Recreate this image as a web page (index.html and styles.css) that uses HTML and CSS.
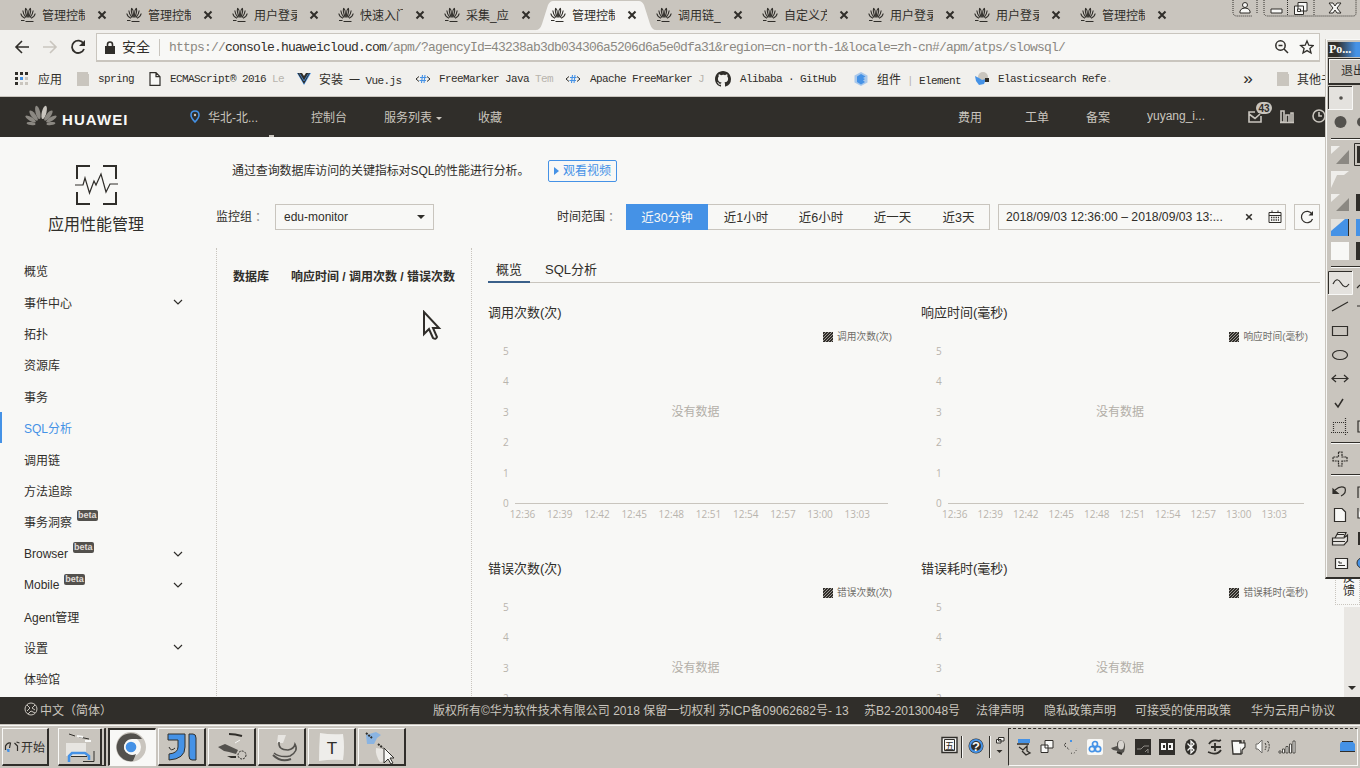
FILE: index.html
```html
<!DOCTYPE html>
<html lang="zh-CN">
<head>
<meta charset="utf-8">
<title>应用性能管理</title>
<link rel="stylesheet" href="styles.css">
</head>
<body>
<svg class="defs" width="0" height="0">
  <symbol id="petal" viewBox="0 0 16 16">
    <path d="M7.3 10.5Q4.6 5 5.6 1.5Q7.8 2 7.3 10.5M8.7 10.5Q11.4 5 10.4 1.5Q8.2 2 8.7 10.5M6 10.5Q3.2 7.500 2.800 3.500M10 10.500Q12.800 7.500 13.200 3.500M5 11.200Q1.500 10 .8 6.500M11 11.200Q14.500 10 15.200 6.500" fill="none" stroke="#302e2a" stroke-width="1.1"/>
    <path d="M1 13.500H4.500M5.500 14.500H13.500" stroke="#302e2a" stroke-width="1"/>
  </symbol>
  <symbol id="x" viewBox="0 0 10 10"><path d="M1.500 1.500L8.500 8.500M8.500 1.500L1.500 8.500" stroke="#302e2a" stroke-width="2"/></symbol>
  <symbol id="chev" viewBox="0 0 10 6"><path d="M1 1L5 5L9 1" fill="none" stroke="#302e2a" stroke-width="1.2"/></symbol>
  <symbol id="folder" viewBox="0 0 12 14"><path d="M0 0H11V2H12V14H0Z" fill="#c9c5be"/></symbol>
  <symbol id="fm" viewBox="0 0 16 12"><path d="M4 3.500L1 6L4 8.500M12 3.500L15 6L12 8.500" fill="none" stroke="#302e2a"/><path d="M7.500 2L6.500 10M10 2L9 10M5 4.500H11.500M4.500 7.500H11" stroke="#4592e6" stroke-width="1.100"/></symbol>
  <symbol id="swatch" viewBox="0 0 10 10"><path d="M0 0H10V10H0Z" fill="#302e2a"/><path d="M0 3L3 0M0 6L6 0M0 9L9 0M2 10L10 2M5 10L10 5M8 10L10 8" stroke="#aaa7a1" stroke-width=".9"/></symbol>
</svg>

<div class="tabs">
  <svg class="tab-active" width="121" height="31" viewBox="0 0 121 31"><path d="M0 30Q4 30 6 24L12 5Q14 1 17 1H103Q106 1 108 5L114 24Q116 30 120 30V31H0Z" fill="#f4f3f1"/></svg>
  <div class="tab"><svg><use href="#petal"/></svg><span>管理控制</span><svg class="close"><use href="#x"/></svg></div>
  <div class="tab"><svg><use href="#petal"/></svg><span>管理控制</span><svg class="close"><use href="#x"/></svg></div>
  <div class="tab"><svg><use href="#petal"/></svg><span>用户登录</span><svg class="close"><use href="#x"/></svg></div>
  <div class="tab"><svg><use href="#petal"/></svg><span>快速入门</span><svg class="close"><use href="#x"/></svg></div>
  <div class="tab"><svg><use href="#petal"/></svg><span>采集_应</span><svg class="close"><use href="#x"/></svg></div>
  <div class="tab"><svg><use href="#petal"/></svg><span>管理控制</span><svg class="close"><use href="#x"/></svg></div>
  <div class="tab"><svg><use href="#petal"/></svg><span>调用链_</span><svg class="close"><use href="#x"/></svg></div>
  <div class="tab"><svg><use href="#petal"/></svg><span>自定义方</span><svg class="close"><use href="#x"/></svg></div>
  <div class="tab"><svg><use href="#petal"/></svg><span>用户登录</span><svg class="close"><use href="#x"/></svg></div>
  <div class="tab"><svg><use href="#petal"/></svg><span>用户登录</span><svg class="close"><use href="#x"/></svg></div>
  <div class="tab"><svg><use href="#petal"/></svg><span>管理控制</span><svg class="close"><use href="#x"/></svg></div>
  <svg class="winctl" width="128" height="20" viewBox="0 0 128 20">
    <path d="M1 0V12Q1 16 5 16H20M25 0V14M32 0V13Q32 16 36 16H121Q124 16 124 13V0M55.500 0V16M82 0V16" fill="none" stroke="#302e2a" stroke-dasharray="1 1"/>
    <g fill="#f8f8f6" stroke="#302e2a"><circle cx="13" cy="5" r="2.500"/><path d="M8 13V11Q9 8 13 8Q17 8 18 11V13ZM39 9H50V13H39Z"/><path d="M66 2.500H75V11H66ZM62.500 6H71.500V14.500H62.500Z"/><path d="M65.500 9H68.500V11.500H65.500Z"/><path d="M97 3H101L103 6L105 3H109L105 8L109 13H105L103 10L101 13H97L101 8Z"/></g>
  </svg>
</div>

<div class="toolbar">
  <svg width="70" height="32" viewBox="0 0 70 32"><g fill="none" stroke="#302e2a" stroke-width="1.600"><path d="M22 11L16 17L22 23M16 17H29"/><path d="M50 11L56 17L50 23M56 17H43" stroke="#c9c5be"/></g></svg>
  <svg class="reload" width="16" height="16" viewBox="0 0 16 16"><path d="M13.500 4.500A6.200 6.200 0 1 0 14 10" fill="none" stroke="#302e2a" stroke-width="1.800"/><path d="M15 1V7H9Z" fill="#302e2a"/></svg>
  <div class="omnibox">
    <svg width="10" height="13" viewBox="0 0 10 13"><path d="M0 5H10V13H0Z" fill="#302e2a"/><path d="M2.500 6V3.500Q2.500 1 5 1T7.500 3.500V6" fill="none" stroke="#302e2a" stroke-width="1.600"/></svg>
    <span class="safe">安全</span>
    <span class="url"><i>https://</i>console.huaweicloud.com<i>/apm/?agencyId=43238ab3db034306a5206d6a5e0dfa31&amp;region=cn-north-1&amp;locale=zh-cn#/apm/atps/slowsql/</i></span>
    <svg class="omni-icons" width="42" height="16" viewBox="0 0 42 16"><g fill="none" stroke="#302e2a" stroke-width="1.500"><circle cx="8.500" cy="6.500" r="4.700"/><path d="M12 10L16 14M6.500 6.500H10.500"/><path d="M35 2L36.800 6.200L41.300 6.600L37.900 9.500L39 14L35 11.600L31 14L32.100 9.500L28.700 6.600L33.200 6.200Z" stroke-width="1.300"/></g></svg>
  </div>
</div>

<div class="bookmarks">
  <svg class="i" viewBox="0 0 14 14"><g fill="#302e2a"><path d="M0 0H3V3H0ZM5 0H8V3H5ZM10 0H13V3H10ZM0 5H3V8H0ZM0 10H3V13H0Z"/></g><path d="M10 5H13V8H10ZM5 10H8V13H5ZM10 10H13V13H10Z" fill="#c9c5be"/><path d="M5 5H8V8H5Z" fill="#4592e6"/></svg><b>应用</b>
  <svg class="i"><use href="#folder"/></svg><span>spring</span>
  <svg class="i" viewBox="0 0 14 14"><path d="M2 .7H8L12 4.700V13.300H2ZM8 .7V4.700H12" fill="#f8f8f6" stroke="#302e2a" stroke-width="1.200"/></svg><span>ECMAScript® 2016 <i>Le</i></span>
  <svg class="i" viewBox="0 0 14 14"><path d="M0 1H3L7 8L11 1H14L7 13Z" fill="#4592e6"/><path d="M.5 1H5L7 4L9 1H13L7 12Z" fill="#302e2a"/><path d="M2.500 1.500L7 9L11.500 1.500" fill="none" stroke="#4592e6" stroke-width=".8"/></svg><span><b>安装</b> 一 Vue.js</span>
  <svg class="i wide"><use href="#fm"/></svg><span>FreeMarker Java <i>Tem</i></span>
  <svg class="i wide"><use href="#fm"/></svg><span>Apache FreeMarker <i>J</i></span>
  <svg class="i wide" viewBox="0 0 16 16"><path fill="#302e2a" d="M8 0C3.580 0 0 3.580 0 8c0 3.540 2.290 6.530 5.470 7.590.4.070.55-.17.55-.38v-1.490c-2.230.48-2.700-.94-2.700-.94-.36-.92-.89-1.170-.89-1.170-.73-.5.06-.49.06-.49.8.06 1.230.83 1.230.83.71 1.220 1.870.87 2.330.66.070-.52.280-.87.510-1.070-1.780-.2-3.640-.89-3.640-3.950 0-.87.310-1.590.82-2.150-.08-.2-.36-1.020.08-2.120 0 0 .67-.21 2.200.82A7.700 7.700 0 0 1 8 3.870c.68 0 1.360.09 2 .27 1.530-1.040 2.200-.82 2.200-.82.44 1.100.16 1.920.08 2.120.51.56.82 1.270.82 2.150 0 3.070-1.870 3.750-3.650 3.950.29.25.54.73.54 1.480v2.190c0 .21.150.46.550.38A8 8 0 0 0 16 8c0-4.420-3.580-8-8-8z"/></svg><span>Alibaba · GitHub</span>
  <svg class="i" viewBox="0 0 14 14"><path d="M7 0L13.500 3.500V10.500L7 14L.5 10.500V3.500Z" fill="#a9c8eb"/><path d="M7 2L11.500 4.500L9 6L11 7L9 8.500L11 10L7 12.500L3 10V4.500Z" fill="#4592e6"/></svg><span><b>组件</b> <i>|</i> Element</span>
  <svg class="i" viewBox="0 0 14 14"><circle cx="8" cy="5" r="5" fill="#c9c5be"/><path d="M0 4L4 6L7 8L11 7L9 12L4 13L1 9Z" fill="#4592e6"/><path d="M10 6H14V10H10Z" fill="#302e2a"/></svg><span>Elasticsearch Refe<i>.</i></span>
  <span class="more">»</span><svg class="i"><use href="#folder"/></svg><b>其他书签</b>
</div>

<header class="top">
  <svg width="32" height="24" viewBox="0 0 32 24"><g fill="#8b8882"><ellipse cx="16" cy="8" rx="2.300" ry="6.800" transform="rotate(-14 16 21)"/><ellipse cx="16" cy="8" rx="2.300" ry="6.800" transform="rotate(14 16 21)" fill="#c9c5be"/><ellipse cx="16" cy="9" rx="2.200" ry="6.300" transform="rotate(-38 16 21)"/><ellipse cx="16" cy="9" rx="2.200" ry="6.300" transform="rotate(38 16 21)"/><ellipse cx="16" cy="9" rx="1.900" ry="6" transform="rotate(-60 16 21)"/><ellipse cx="16" cy="9" rx="1.900" ry="6" transform="rotate(60 16 21)"/><ellipse cx="16" cy="11" rx="1.500" ry="4.500" transform="rotate(-82 16 21)"/><ellipse cx="16" cy="11" rx="1.500" ry="4.500" transform="rotate(82 16 21)"/></g></svg>
  <span class="brand">HUAWEI</span>
  <svg width="10" height="13" viewBox="0 0 10 13"><path d="M5 12Q1 8 1 5Q1 1 5 1T9 5Q9 8 5 12Z" fill="none" stroke="#4592e6" stroke-width="1.600"/><circle cx="5" cy="5" r="1.200" fill="#c9c5be"/></svg>
  <span>华北-北...</span><span>控制台</span><span>服务列表 <em class="tri"></em></span><span>收藏</span>
  <span>费用</span><span>工单</span><span>备案</span><span>yuyang_i...</span>
  <svg width="80" height="26" viewBox="0 0 80 26"><g fill="none" stroke="#c9c5be" stroke-width="1.600"><path d="M9 9H3V19H15V13M3 11L9 15.500L14 11"/><path d="M35 8V19H38V8ZM40 19V12H43V19M45 19V10H47V19M34 19.500H48"/><circle cx="73" cy="13" r="6"/><path d="M73 9V13H76"/></g><rect x="10" y="-1" width="16" height="12" rx="6" fill="#c9c5be"/><text x="18" y="9" text-anchor="middle" class="badge">43</text></svg>
</header>
<i class="notch"></i>

<main>
  <aside>
    <svg class="logo" width="44" height="41" viewBox="0 0 44 41"><g fill="none" stroke="#302e2a"><path d="M15 1H2V14M28 1H41V14M2 27V39H15M41 27V39H28" stroke-width="2"/><path d="M0 20H8L10 13L14.500 28L19 16L21 20L26 9L31 27L35 19H43" stroke-width="1.200"/></g></svg>
    <h1>应用性能管理</h1>
    <nav>
      <a>概览</a>
      <a>事件中心<svg><use href="#chev"/></svg></a>
      <a>拓扑</a>
      <a>资源库</a>
      <a>事务</a>
      <a class="on">SQL分析</a>
      <a>调用链</a>
      <a>方法追踪</a>
      <a>事务洞察<sup>beta</sup></a>
      <a>Browser<sup>beta</sup><svg><use href="#chev"/></svg></a>
      <a>Mobile<sup>beta</sup><svg><use href="#chev"/></svg></a>
      <a>Agent管理</a>
      <a>设置<svg><use href="#chev"/></svg></a>
      <a>体验馆</a>
    </nav>
  </aside>
  <section class="content">
    <div class="desc"><p>通过查询数据库访问的关键指标对SQL的性能进行分析。</p><a class="video">观看视频</a></div>
    <div class="filters">
      <label class="l1">监控组<i>：</i></label>
      <div class="select">edu-monitor<em class="tri"></em></div>
      <label class="l2">时间范围<i>：</i></label>
      <div class="seg"><a class="on">近30分钟</a><a>近1小时</a><a>近6小时</a><a>近一天</a><a>近3天</a></div>
      <div class="date"><span>2018/09/03 12:36:00 – 2018/09/03 13:...</span><svg class="dx"><use href="#x"/></svg><svg width="14" height="14" viewBox="0 0 14 14"><path d="M1 2.500H13V12.500H1ZM1 5.500H13M4 .5V3M10 .5V3" fill="none" stroke="#302e2a"/><path d="M3 7.500H11M3 10H11" stroke="#302e2a" stroke-width="1.300" stroke-dasharray="1.300 1"/></svg></div>
      <div class="refresh"><svg width="14" height="14" viewBox="0 0 14 14"><path d="M12 4A5.700 5.700 0 1 0 12.500 9" fill="none" stroke="#302e2a" stroke-width="1.200"/><path d="M13 1V5.500H8.500Z" fill="#302e2a"/></svg></div>
    </div>
    <div class="split">
      <div class="db"><span>数据库</span><span>响应时间 / 调用次数 / 错误次数</span></div>
      <div class="detail">
        <div class="dtabs"><a class="on">概览</a><a>SQL分析</a></div>
        <div class="charts">
          <div class="chart">
            <h2>调用次数(次)</h2>
            <p class="legend"><svg><use href="#swatch"/></svg>调用次数(次)</p>
            <div class="plot"><div class="ys"><span>5</span><span>4</span><span>3</span><span>2</span><span>1</span><span>0</span></div><div class="area">没有数据</div></div>
            <div class="xs"><span>12:36</span><span>12:39</span><span>12:42</span><span>12:45</span><span>12:48</span><span>12:51</span><span>12:54</span><span>12:57</span><span>13:00</span><span>13:03</span></div>
          </div>
          <div class="chart r">
            <h2>响应时间(毫秒)</h2>
            <p class="legend"><svg><use href="#swatch"/></svg>响应时间(毫秒)</p>
            <div class="plot"><div class="ys"><span>5</span><span>4</span><span>3</span><span>2</span><span>1</span><span>0</span></div><div class="area">没有数据</div></div>
            <div class="xs"><span>12:36</span><span>12:39</span><span>12:42</span><span>12:45</span><span>12:48</span><span>12:51</span><span>12:54</span><span>12:57</span><span>13:00</span><span>13:03</span></div>
          </div>
          <div class="chart">
            <h2>错误次数(次)</h2>
            <p class="legend"><svg><use href="#swatch"/></svg>错误次数(次)</p>
            <div class="plot"><div class="ys"><span>5</span><span>4</span><span>3</span><span>2</span></div><div class="area">没有数据</div></div>
          </div>
          <div class="chart r">
            <h2>错误耗时(毫秒)</h2>
            <p class="legend"><svg><use href="#swatch"/></svg>错误耗时(毫秒)</p>
            <div class="plot"><div class="ys"><span>5</span><span>4</span><span>3</span><span>2</span></div><div class="area">没有数据</div></div>
          </div>
        </div>
      </div>
    </div>
  </section>
  <div class="scroll"><em class="tri"></em></div>
  <div class="feedback">反馈</div>
</main>

<footer>
  <svg width="14" height="14" viewBox="0 0 14 14"><g fill="none" stroke="#c9c5be"><circle cx="7" cy="7" r="6"/><path d="M3 3L6 6L3 9M11 3L8 6L11 8M4 12L7 9L11 11"/></g></svg><span>中文（简体）</span>
  <span>版权所有©华为软件技术有限公司 2018 保留一切权利 苏ICP备09062682号- 13</span><span>苏B2-20130048号</span><span>法律声明</span><span>隐私政策声明</span><span>可接受的使用政策</span><span>华为云用户协议</span>
</footer>

<div class="taskbar">
  <div class="tb start"><svg width="17" height="20" viewBox="0 0 16 20"><path d="M1 13V9Q3 5 6 6L5 11M10 6L13 9V14M12 5L15 6" fill="none" stroke="#302e2a" stroke-width="1.200"/><path d="M2 12H5V15H3Z" fill="#4592e6"/></svg>开始</div>
  <div class="tb stack"><svg viewBox="0 0 40 34"><path d="M5 13H25V26H5Z" fill="#e7e5e1"/><path d="M8 4L14 6M18 7L28 9" stroke="#302e2a"/><path d="M8 32V26L11 23H24L28 26V30" fill="none" stroke="#4592e6" stroke-width="2.500"/><path d="M10 26.500H26M22 31.500H33V21" fill="none" stroke="#302e2a"/><path d="M16 6L22 7M24 11H30" stroke="#f8f8f6" stroke-width="2"/></svg></div>
  <div class="tb sel"><svg viewBox="0 0 40 34"><circle cx="19" cy="16" r="12.500" fill="none" stroke="#c9c5be" stroke-width="5"/><path d="M30 8A14 14 0 1 0 21 30L24 23A8 8 0 1 1 20 8Z" fill="#53514d"/><circle cx="19" cy="16" r="7" fill="#f8f8f6"/><circle cx="19" cy="16" r="5.300" fill="#4592e6"/></svg></div>
  <div class="tb"><svg viewBox="0 0 40 34"><path d="M7 4H24V17Q24 29 8 30V24Q17 23 17 17V10H7ZM28 4H32Q35 4 35 8V30H31Q28 30 28 26Z" fill="#4592e6" stroke="#302e2a"/><path d="M8 17Q10 22 14 18" fill="none" stroke="#302e2a"/></svg></div>
  <div class="tb"><svg viewBox="0 0 40 34"><path d="M18 4Q24 4 31 6" stroke="#302e2a" stroke-width="2" fill="none"/><path d="M7 17L14 14L27 20L25 24L18 22L13 21Z" fill="#53514d"/><path d="M16 26H25V28H20Z" fill="#302e2a"/><circle cx="31" cy="25" r="4" fill="none" stroke="#302e2a" stroke-dasharray="2 1"/><path d="M24 13L29 10" stroke="#f8f8f6"/></svg></div>
  <div class="tb"><svg viewBox="0 0 40 34"><path d="M17 5H25L22 13H16Z" fill="#e7e5e1"/><path d="M18 12Q17 20 27 20Q33 19 34 14Q38 21 29 26Q19 28 13 23" fill="none" stroke="#53514d" stroke-width="1.500"/><path d="M12 25Q20 33 30 29" fill="none" stroke="#53514d" stroke-width="2"/></svg></div>
  <div class="tb"><svg viewBox="0 0 40 34"><path d="M9 3Q20 5 32 4Q34 17 32 30Q20 29 8 31Q8 17 9 3" fill="#eeedea"/><text x="21" y="24" text-anchor="middle" class="tt">T</text></svg></div>
  <div class="tb"><svg viewBox="0 0 40 34"><path d="M5 5L15 2L20 5L16 8L13 14L6 14Z" fill="#8ab4e2"/><path d="M5 3L11 8M17 14L22 18" stroke="#302e2a" stroke-width="2" stroke-dasharray="2 1"/><path d="M15 18L28 20Q31 28 25 31L19 32Q14 25 15 18" fill="#e9e7e3"/><path d="M23 18V33L27 29L30 34L32 33L29 28H33Z" fill="#f8f8f6" stroke="#302e2a"/></svg></div>
  <div class="tools">
    <svg width="64" height="32" viewBox="0 0 64 32"><path d="M1 3.500H16V18.500H1Z" fill="#f8f8f6" stroke="#302e2a" stroke-width="1.400"/><path d="M3.500 5.500H13.500V16.500H3.500Z" fill="none" stroke="#302e2a"/><text x="8.500" y="15" text-anchor="middle" class="wu">五</text><path d="M20.500 2V24M48.500 2V24" stroke="#302e2a"/><path d="M21.500 2V24M49.500 2V24" stroke="#f8f8f6"/><circle cx="35" cy="12" r="7.500" fill="#302e2a"/><circle cx="35" cy="12" r="6" fill="none" stroke="#4592e6" stroke-width="2"/><text x="35" y="17" text-anchor="middle" class="q">?</text><path d="M57.500 3.500H63V7H57.500ZM55.500 5.500H60V9H55.500Z" fill="#f8f8f6" stroke="#302e2a"/><path d="M55.500 16H61.500L58.500 19Z" fill="#302e2a"/></svg>
  </div>
  <div class="tray">
    <svg viewBox="0 0 18 18"><path d="M4 1H16V5H4Z" fill="#4592e6"/><path d="M3 6H15M5 9L9 12L13 8V13L16 15L12 17L8 13" fill="none" stroke="#302e2a" stroke-width="1.300"/></svg>
    <svg viewBox="0 0 18 18"><path d="M7 2.500H15V10H7ZM3 7H10V14.500H3Z" fill="#f8f8f6" stroke="#302e2a"/></svg>
    <svg viewBox="0 0 18 18"><path d="M4 5Q1 7 4 9T7 12" fill="none" stroke="#302e2a" stroke-dasharray="2 1"/><path d="M9 15Q13 17 15 10" fill="none" stroke="#302e2a" stroke-dasharray="1 2"/><path d="M8 2H10V4H8Z" fill="#4592e6"/></svg>
    <svg viewBox="0 0 18 18"><rect x="1" y="1" width="16" height="16" rx="2" fill="#f8f8f6"/><g fill="none" stroke="#4592e6" stroke-width="1.700"><circle cx="9" cy="6" r="2.500"/><circle cx="6" cy="11" r="2.700"/><circle cx="12" cy="11" r="2.700"/></g></svg>
    <svg viewBox="0 0 18 18"><path d="M7 5Q10 0 14 4Q16 8 14 14Q10 17 8 13L3 12L1 10L7 8Z" fill="#53514d"/><ellipse cx="11" cy="7" rx="3" ry="4.500" fill="#d8d5d0"/><path d="M7 14L12 16" stroke="#302e2a" stroke-width="2"/></svg>
    <svg viewBox="0 0 18 18"><path d="M1 1H17V17H1Z" fill="#302e2a"/><path d="M3 11H7L10 8H15M11 14L14 11V15" fill="none" stroke="#8d8a85"/></svg>
    <svg viewBox="0 0 18 18"><path d="M1 1H17V17H1Z" fill="#302e2a"/><path d="M3 5H15V12H3Z" fill="#f8f8f6"/><path d="M5 7H7V10H5ZM8 5H10V12H8ZM11 7H13V10H11Z" fill="#302e2a"/></svg>
    <svg viewBox="0 0 18 18"><ellipse cx="9" cy="9" rx="6" ry="8" fill="#302e2a"/><path d="M5.500 5.500L12 12L9 15V3L12 6L5.500 12.500" fill="none" stroke="#f8f8f6" stroke-width="1.300"/></svg>
    <svg viewBox="0 0 18 18"><path d="M3 6Q6 1 13 3L15 2M15 12Q12 17 5 15L2 14M9 5V13M5 9H15" fill="none" stroke="#302e2a" stroke-width="1.800"/></svg>
    <svg viewBox="0 0 18 18"><path d="M2 3H11V16H3Z" fill="#f8f8f6" stroke="#302e2a" stroke-width="1.300"/><path d="M9 5H15V9L12 12V16M10 2V5M14 2V5" fill="#f8f8f6" stroke="#302e2a" stroke-width="1.200"/></svg>
    <svg viewBox="0 0 18 18"><path d="M2 6H4L8 2V15L4 11H2Z" fill="#f8f8f6" stroke="#6f6d69"/><path d="M11 5Q13 8 11 12M13.500 3Q17 8 13.500 14" fill="none" stroke="#302e2a" stroke-dasharray="2 1"/></svg>
    <svg viewBox="0 0 18 18"><path d="M1 15V13H3V15ZM4.500 15V11H6.500V15ZM8 15V8.500H10V15ZM11.500 15V6H13.500V15ZM15 15V3H17V15Z" fill="#f8f8f6" stroke="#302e2a" stroke-width=".8"/></svg>
    <svg class="last" viewBox="0 0 18 18"><path d="M3 4H15L17 6V13H2V6Z" fill="#4592e6"/><path d="M4 3.500H15M2 13.500H17" stroke="#302e2a"/></svg>
  </div>
</div>

<div class="palette">
  <div class="ptitle">Po...</div>
  <div class="pexit">退出</div>
  <svg width="32" height="492" viewBox="1328 86 32 492">
    <path d="M1328.500 86.500H1352.500V109.500H1328.500ZM1328.500 271.500H1352.500V294.500H1328.500Z" fill="#e4e2de" stroke="#f8f8f6"/>
    <path d="M1328.500 109V86.500H1352M1328.500 294V271.500H1352" fill="none" stroke="#302e2a"/>
    <circle cx="1341" cy="98" r="1.800" fill="#53514d"/><circle cx="1340.500" cy="122" r="6" fill="#53514d"/><circle cx="1362" cy="122" r="5" fill="#53514d"/>
    <path d="M1331 138.500H1360M1331 266.500H1360M1331 442.500H1360M1331 474.500H1360" stroke="#302e2a"/><path d="M1331 139.500H1360M1331 267.500H1360M1331 443.500H1360M1331 475.500H1360" stroke="#f8f8f6"/>
    <path d="M1331 146H1340L1331 154ZM1331 171H1349L1344 175H1337L1331 188ZM1331 194H1340L1331 202Z" fill="#efeeeb"/>
    <path d="M1349 150V164H1336ZM1349 198V211H1336Z" fill="#8b8882"/>
    <path d="M1357 146H1360V163H1357ZM1356 194H1360V211H1356ZM1356 242H1360V260H1356Z" fill="#302e2a"/><path d="M1360 143.500H1354.500V165.500H1360" fill="none" stroke="#302e2a"/>
    <path d="M1331 219H1348V236H1331Z" fill="#4592e6"/><path d="M1331 219H1345L1331 231Z" fill="#e4e2de"/><path d="M1348.500 219V236" stroke="#302e2a"/><path d="M1356 219H1360V236H1356Z" fill="#4592e6"/>
    <path d="M1331 242H1349V260H1331Z" fill="#f8f8f6"/>
    <g fill="none" stroke="#302e2a" stroke-width="1.200">
      <path d="M1333 284Q1337 276 1341 283T1349 284M1332 311L1348 302M1357 306H1360M1357 288L1360 285"/>
      <path d="M1332.500 326.500H1347.500V335.500H1332.500Z"/><ellipse cx="1340" cy="355" rx="7.500" ry="4.500"/>
      <path d="M1332 378.500H1348M1336 375L1332 378.500L1336 382M1344 375L1348 378.500L1344 382"/><path d="M1335 403L1338 407L1343 399" stroke-width="1.500"/>
      <path d="M1333.500 433V422.500H1345M1331 432.500H1349M1345.500 418V436" stroke-dasharray="1 1"/><path d="M1362 421H1358V432H1362"/>
      <path d="M1338.500 452H1342V457H1347V461H1342V466H1338.500V461H1333V457H1338.500Z" stroke-dasharray="2 .7"/>
      <path d="M1335 490Q1341 485 1345 488Q1347 493 1341 496"/><path d="M1360 487H1358V498"/><path d="M1333 489V493.500H1338Z" fill="#302e2a"/>
      <path d="M1334.500 508.500H1342L1345.500 512V521.500H1334.500Z" fill="#f8f8f6"/><path d="M1358 508V518H1362" fill="#f8f8f6"/>
      <path d="M1335 538L1338 532.500H1346L1344 537M1332.500 538H1344L1347.500 535V541L1344 545H1332.500ZM1333 541.500H1345M1337 534.500H1344" fill="#e4e2de"/>
      <path d="M1335.500 558.500H1347.500V568.500H1335.500Z" fill="#f8f8f6"/><path d="M1338 565.500H1345M1339 561V563H1342" stroke-width="1"/>
    </g>
    <path d="M1358 532H1360V545H1358Z" fill="#302e2a"/><circle cx="1362" cy="563" r="5" fill="#4592e6" stroke="#302e2a"/>
  </svg>
</div>
<svg class="cursor" width="20" height="32" viewBox="0 0 20 32"><path d="M2 2V24L7 19L11 28Q14 30 15 27L11 18H17Z" fill="#f8f8f6" stroke="#302e2a" stroke-width="2"/></svg>
</body>
</html>
```

FILE: styles.css
```css
* { box-sizing: border-box; }
body {
  margin: 0; width: 1360px; height: 768px; overflow: hidden; position: relative;
  display: flex; flex-direction: column;
  background: #f8f8f6; color: #302e2a;
  font: 12px "Liberation Sans", "Noto Sans CJK SC", sans-serif;
  white-space: nowrap;
}
body > * { flex: none; }
i { font-style: normal; }
b { font-weight: 400; }
p, h1, h2 { margin: 0; font-weight: 400; }
.defs { position: absolute; }
.tri { display: inline-block; width: 0; height: 0; border: 4px solid transparent; border-bottom: 0; border-top-color: currentColor; }

/* browser tabs */
.tabs { height: 30px; background: #c9c5be; padding-left: 20px; display: flex; position: relative; }
.tab-active { position: absolute; left: 536px; top: 0; }
.tab { width: 106px; height: 30px; display: flex; align-items: center; position: relative; }
.tab svg { width: 16px; height: 16px; }
.tab span { width: 43px; margin: -2px 12px 0 6px; overflow: hidden; font-size: 12px; }
.tab .close { width: 10px; height: 10px; }
.winctl { position: absolute; left: 1232px; top: 0; }

.toolbar { height: 32px; background: #f1f0ed; display: flex; align-items: center; }
.reload { margin: 2px 10px 0 0; }
.omnibox { width: 1224px; height: 29px; margin-top: 3px; background: #f8f8f6; border: 1px solid #c9c5be; border-bottom-width: 2px; display: flex; align-items: center; padding-left: 8px; }
.safe { font-size: 14px; margin-left: 7px; width: 38px; border-right: 1px solid #c9c5be; line-height: 17px; }
.url { font: 13px "Liberation Mono", monospace; letter-spacing: -.801px; margin-left: 9px; }
.url i { color: #8b8882; }
.omni-icons { margin-left: auto; margin-right: 5px; }

.bookmarks { height: 35px; background: #f1f0ed; border-bottom: 1px solid #c9c5be; display: grid; align-items: center; align-content: center;
  grid-template-columns: 23px 38px 22px 50px 22px 127px 22px 96px 24px 126px 25px 125px 25px 114px 23px 98px 23px 245px 33px 21px 60px;
  padding-left: 15px; font: 11px "Liberation Mono", "Noto Sans CJK SC", monospace; letter-spacing: -.6px; }
.bookmarks b { font-size: 12px; letter-spacing: 0; }
.bookmarks i { color: #b8b4ad; }
.bookmarks .i { width: 14px; height: 14px; }
.bookmarks .wide { width: 16px; height: 16px; }
.bookmarks .more { font-size: 17px; line-height: 17px; }

/* console header */
.top { height: 40px; background: #302e2a; color: #c9c5be; display: grid; align-items: center;
  grid-template-columns: 37px 128px 18px 103px 73px 94px 480px 67px 61px 61px 99px 80px; padding: 0 0 2px 25px; }
.brand { font-size: 15px; font-weight: 700; color: #f8f8f6; padding-top: 7px; letter-spacing: 1.1px; }
.top .tri { margin: 0 0 2px 1px; border-width: 3px; border-bottom: 0; }
.badge { font: 700 10px "Liberation Sans", sans-serif; fill: #302e2a; }
.top svg { overflow: visible; }
.notch { position: absolute; left: 269px; top: 135px; width: 5px; height: 2px; background: #c9c5be; }

main { height: 560px; display: flex; position: relative; overflow: hidden; }
aside { width: 216px; }
.logo { display: block; margin: 28px 0 0 75px; }
h1 { font-size: 16px; line-height: 24px; margin: 7px 0 0 48px; }
nav { margin-top: 18px; }
nav a { display: flex; align-items: center; height: 31.400px; padding-left: 24px; position: relative; }
nav .on { color: #4592e6; padding-left: 22px; border-left: 2px solid #4592e6; }
nav svg { width: 10px; height: 6px; position: absolute; left: 173px; }
nav a:nth-last-child(n+3):nth-last-child(-n+5) { padding-top: 1px; }
sup { font: 700 9px/11px "Liberation Sans", sans-serif; background: #53514d; color: #e0ddd8; border-radius: 2px; padding: 0 1px; margin: 0 0 12px 5px; }

.content { width: 1104px; }
.desc { display: flex; height: 24px; margin: 22px 0 20px 16px; align-items: center; }
.desc p { width: 316px; margin-top: -3px; letter-spacing: -.1px; }
.video { width: 69px; height: 22px; border: 1px solid #4592e6; border-radius: 2px; color: #4592e6; line-height: 21px; padding-left: 14px; position: relative; }
.video::before { content: ""; position: absolute; left: 5px; top: 6px; border: 4px solid transparent; border-left: 5px solid #4592e6; border-right: 0; }
.filters { display: flex; height: 27px; align-items: center; }
.filters i { color: #8b8882; margin-left: 3px; }
.l1 { width: 59px; } .l2 { width: 69px; margin-left: 123px; }
.l1, .l2 { margin-top: -3px; }
.select { width: 159px; height: 26px; border: 1px solid #c9c5be; display: flex; align-items: center; justify-content: space-between; padding: 0 8px; }
.seg { display: grid; grid-template-columns: 82px 76px 74px 69px 63px; height: 26px; border: 1px solid #c9c5be; border-left: 0; text-align: center; line-height: 26px; width: 364px; }
.seg a { font-size: 12.500px; }
.seg .on { background: #4592e6; color: #f8f8f6; margin: -1px 0; line-height: 28px; height: 26px; }
.date { width: 288px; height: 26px; margin: 0 8px; border: 1px solid #c9c5be; display: flex; align-items: center; padding-left: 7px; }
.date span { width: 239px; font-size: 12.200px; }
.dx { width: 8px; height: 8px; margin-right: 15px; }
.refresh { width: 26px; height: 26px; border: 1px solid #c9c5be; display: grid; place-items: center; }
.split { display: flex; margin-top: 18px; height: 450px; }
.db { width: 256px; border: 1px dotted #c9c5be; border-width: 0 1px; padding: 20px 0 0 16px; display: flex; font-weight: 700; line-height: 18px; }
.db span:first-child { width: 58px; }
.detail { width: 832px; margin-left: 16px; }
.dtabs { height: 35px; display: flex; border-bottom: 1px solid #c9c5be; font-size: 13px; line-height: 43px; }
.dtabs a { height: 35px; padding: 0 8px; margin-right: 7px; }
.dtabs .on { width: 42px; border-bottom: 2px solid #3b608a; }
.charts { display: grid; grid-template-columns: 433px 399px; grid-auto-rows: 256px; }
.chart { padding-top: 20px; }
h2 { font-size: 13px; line-height: 20px; }
.legend { width: 404px; height: 14px; margin-top: 7px; display: flex; align-items: center; justify-content: flex-end; font-size: 9.700px; color: #6f6d69; line-height: 14px; }
.r .legend { width: 387px; }
.legend svg { width: 10px; height: 10px; margin-right: 4px; }
.plot { display: flex; margin-top: 6px; height: 153px; color: #b8b4ad; }
.ys { width: 27px; padding-left: 15px; font: 10px/12px "Open Sans", sans-serif; margin-top: -5px; }
.ys span { display: block; height: 30.400px; }
.area { width: 373px; height: 154px; border-bottom: 1px solid #c9c5be; text-align: center; line-height: 125px; padding-right: 12px; color: #b3afa8; }
.r .area { width: 356px; }
.xs { display: flex; margin-left: 16px; height: 12px; margin-top: 5px; font: 10px/12px "Open Sans", sans-serif; color: #b8b4ad; }
.xs span { width: 37.200px; text-align: center; flex: none; }
.r .xs span { width: 35.500px; }
.scroll { position: absolute; left: 1344px; top: 470px; width: 16px; height: 90px; background: #e9e7e3; padding: 79px 0 0 4px; line-height: 4px; }
.scroll .tri { display: block; }
.feedback { position: absolute; left: 1335px; top: 426px; width: 25px; height: 42px; background: #f8f8f6; border: 1px dotted #c9c5be; font-size: 12px; line-height: 13px; white-space: normal; padding: 8px 5px 0 7px; overflow-wrap: anywhere; }

footer { height: 27px; background: #302e2a; color: #c9c5be; display: grid; align-items: center; grid-template-columns: 16px 393px 431px 112px 68px 91px 116px 100px; padding: 0 0 3px 24px; }

.taskbar { height: 44px; background: #c9c5be; border-top: 1px solid #c9c5be; box-shadow: inset 0 1px #f8f8f6; display: flex; padding: 3px 0 0 2px; }
.tb { width: 48px; height: 38px; margin-right: 2px; border: 1px solid #f8f8f6; border-right: 2px solid #302e2a; border-bottom: 2px solid #302e2a; display: flex; align-items: center; }
.tb.start { margin-right: 9px; width: 47px; padding-left: 1px; }
.tb > svg { width: 40px; height: 34px; flex: none; margin-left: 2px; }
.tb.start > svg { width: 17px; height: 20px; margin: 0; }
.tb.stack { border-right: 6px double #302e2a; }
.tb.sel { background: #f8f8f6; border: 2px solid #302e2a; border-right: 1px solid #f8f8f6; border-bottom: 1px solid #f8f8f6; }
.tt { font: 17px "Liberation Sans", sans-serif; fill: #302e2a; }
.wu { font: 9px "Noto Sans CJK SC", sans-serif; fill: #302e2a; }
.q { font: 700 13px "Liberation Sans", sans-serif; fill: #f8f8f6; }
.tools { margin: 6px 3px 0 auto; width: 64px; }
.tray { width: 350px; height: 38px; margin-right: 2px; border: 1px solid #f8f8f6; border-top: 1px dashed #302e2a; border-left: 1px solid #302e2a; display: flex; align-items: center; gap: 6px; padding-left: 5px; }
.tray svg { width: 18px; height: 18px; flex: none; }
.tray .last { margin-left: 36px; }

/* floating tool palette */
.palette { position: absolute; left: 1325px; top: 39px; width: 35px; height: 540px; overflow: hidden; background: #c9c5be; border-left: 1px solid #c9c5be; border-bottom: 2px solid #302e2a; box-shadow: inset 1px 1px #f8f8f6; padding: 3px 0 0 2px; }
.ptitle { height: 15px; background: linear-gradient(90deg, #302e2a 9px, #4592e6 28px); color: #f8f8f6; font: 700 12px/14px "Liberation Serif", serif; padding-left: 1px; }
.pexit { height: 27px; margin: 1px 0; border: 1px solid #302e2a; border-width: 1px 0 2px 1px; box-shadow: inset 1px 1px #f8f8f6; padding-left: 12px; line-height: 24px; }
.palette svg { display: block; }
.cursor { position: absolute; left: 422px; top: 310px; }
```
